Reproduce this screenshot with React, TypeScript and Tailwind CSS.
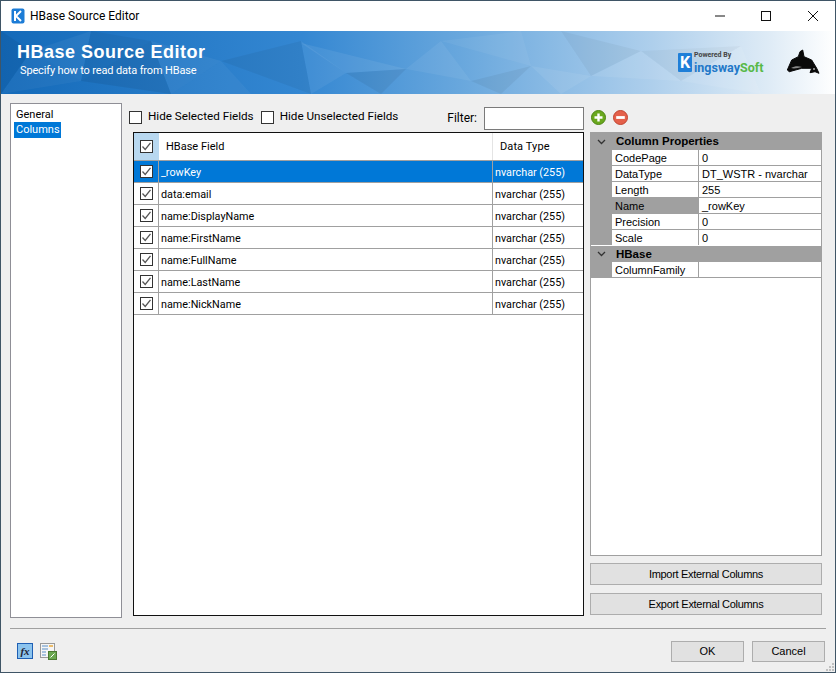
import React from "react";

const F = "[font-family:'Roboto','Liberation_Sans',sans-serif]";
const rows = ["_rowKey", "data:email", "name:DisplayName", "name:FirstName", "name:FullName", "name:LastName", "name:NickName"];

function Tick() {
  return (
    <span className="w-[13px] h-[13px] border border-[#333333] flex items-center justify-center shrink-0 bg-white">
      <svg width="11" height="11" viewBox="0 0 11 11"><path d="M1.5 5.5 L4.2 8.4 L9.5 1.8" fill="none" stroke="#555555" strokeWidth="1.3" /></svg>
    </span>
  );
}

function Banner() {
  const tris: [string, string, number][] = [
    ["0,0 30,20 0,63", "#000", 0.06], ["30,20 90,0 80,50", "#fff", 0.05], ["0,63 30,20 80,50", "#fff", 0.04],
    ["90,0 150,10 80,50", "#000", 0.05], ["150,10 220,30 170,63", "#fff", 0.05], ["80,50 150,10 170,63", "#000", 0.07],
    ["220,30 300,10 310,63", "#000", 0.05], ["220,30 250,63 170,63", "#fff", 0.04], ["300,10 345,42 310,63", "#fff", 0.06],
    ["345,42 405,38 300,12", "#fff", 0.07], ["345,42 405,38 380,63", "#000", 0.06], ["405,38 440,10 470,50", "#fff", 0.06],
    ["440,10 520,0 530,35", "#fff", 0.05], ["470,50 530,35 500,63", "#000", 0.05], ["530,35 590,45 560,63", "#fff", 0.07],
    ["590,45 640,20 680,50", "#fff", 0.08], ["560,0 590,45 640,20", "#000", 0.04], ["680,50 740,15 760,63", "#fff", 0.08],
    ["640,20 740,15 680,50", "#000", 0.03],
  ];
  return (
    <svg className="absolute inset-0" width="834" height="63" viewBox="0 0 834 63" preserveAspectRatio="none">
      <defs>
        <linearGradient id="bg" x1="0" x2="1" y1="0" y2="0">
          <stop offset="0" stopColor="#146ab9" />
          <stop offset="0.36" stopColor="#3487d2" />
          <stop offset="0.55" stopColor="#68a7dd" />
          <stop offset="0.78" stopColor="#aecfec" />
          <stop offset="0.92" stopColor="#deebf6" />
          <stop offset="1" stopColor="#ffffff" />
        </linearGradient>
      </defs>
      <rect width="834" height="63" fill="url(#bg)" />
      {tris.map((t, i) => <polygon key={i} points={t[0]} fill={t[1]} fillOpacity={t[2]} />)}
    </svg>
  );
}

function PropRow({ k, v, sel, end }: { k: string; v: string; sel?: boolean; end?: boolean }) {
  return (
    <div className={`flex h-[16px] bg-[#a0a0a0] ${end ? "border-b border-white" : ""}`}>
      <div className="w-[21px] shrink-0" />
      <div className={`w-[86px] shrink-0 pl-[3px] leading-[16px] whitespace-nowrap ${end ? "" : "border-b border-[#a0a0a0]"} ${sel ? "bg-[#a0a0a0]" : "bg-white"}`}>{k}</div>
      <div className={`ml-px flex-1 bg-white pl-[3px] leading-[16px] whitespace-nowrap ${end ? "" : "border-b border-[#a0a0a0]"}`}>{v}</div>
    </div>
  );
}

function PropHead({ t, h }: { t: string; h: string }) {
  return (
    <div className={`flex items-center bg-[#a0a0a0] font-bold ${h}`}>
      <svg className="ml-[6px] mr-[10px]" width="9" height="6" viewBox="0 0 9 6"><path d="M1 1 L4.5 4.5 L8 1" fill="none" stroke="#333" strokeWidth="1.3" /></svg>
      <span className="leading-[15px] text-[11.5px]">{t}</span>
    </div>
  );
}

export default function App() {
  return (
    <div className="w-[836px] h-[673px] border border-[#3f5566] bg-[#efefef] flex flex-col text-[11px] text-black overflow-hidden [font-family:'Liberation_Sans',sans-serif]">
      <div className="h-[30px] bg-white flex items-center shrink-0">
        <svg className="ml-[10px]" width="14" height="16" viewBox="0 0 14 16">
          <rect x="0.5" y="0.5" width="13" height="15" rx="2" fill="#1c7cd6" />
          <path d="M4 3 V13 M10 3 L5 8 L10 13" fill="none" stroke="#fff" strokeWidth="2" />
        </svg>
        <span className={`ml-[5px] text-[12px] ${F}`}>HBase Source Editor</span>
        <div className="ml-auto flex items-center">
          <svg width="12" height="12" viewBox="0 0 12 12" className="mr-[34px]"><path d="M1 6H11" stroke="#111" /></svg>
          <svg width="12" height="12" viewBox="0 0 12 12" className="mr-[35px]"><rect x="1.5" y="1.5" width="9" height="9" fill="none" stroke="#111" /></svg>
          <svg width="12" height="12" viewBox="0 0 12 12" className="mr-[16px]"><path d="M1 1L11 11M11 1L1 11" stroke="#111" /></svg>
        </div>
      </div>

      <div className="relative h-[63px] shrink-0">
        <Banner />
        <div className="relative pl-[16px] pt-[10px] text-white">
          <div className="font-bold text-[18px] leading-[22px] tracking-[0.5px]">HBase Source Editor</div>
          <div className={`pl-[3px] text-[11px] leading-[16px] tracking-[-0.15px] ${F}`}>Specify how to read data from HBase</div>
        </div>
        <div className={`absolute left-[677px] top-[20px] flex items-start ${F}`}>
          <span className="mt-[2px] w-[14px] h-[19px] bg-[#1f7fd8] rounded-[1px] text-white font-bold text-[16px] leading-[19px] text-center">K</span>
          <div className="flex flex-col ml-[2px]">
            <span className="text-[7px] leading-[9px] font-bold text-[#444]">Powered By</span>
            <span className="text-[12.5px] leading-[15px] font-bold whitespace-nowrap"><span className="text-[#2278c8]">ingsway</span><span className="text-[#57b947]">Soft</span></span>
          </div>
        </div>
        <svg className="absolute left-[786px] top-[18px]" width="34" height="26" viewBox="0 0 34 26">
          <path d="M0.3 21 L4.7 11 L11.3 7.7 L13 2.7 L15.7 1 L17 7.7 L24.7 11 L29.7 19.3 L32 24.3 L28 22.7 L23 23.7 L24.7 19.3 L14.7 19.3 L2.3 22.7Z" fill="#0a0a0a" strokeLinejoin="round" stroke="#0a0a0a" />
          <path d="M4 19 C8 16.5 12 17 15 18 C11 19 7 20 4 19Z" fill="#888" />
          <circle cx="27" cy="20" r="1" fill="#aaa" />
        </svg>
      </div>

      <div className="h-[534px] shrink-0 flex pl-[9px]">
        <div className={`mt-[9px] w-[112px] h-[515px] border border-[#8f8f96] bg-white pt-[2px] pl-[3px] ${F}`}>
          <div className="pl-[2px] h-[16px] leading-[18px]">General</div>
          <div className="pl-[2px] w-[47px] h-[16px] leading-[16px] bg-[#0078d7] text-white">Columns</div>
        </div>

        <div className="ml-[7px] w-[455px] flex flex-col">
          <div className={`flex items-center h-[38px] pt-[13px] pb-[2px] text-[11.7px] ${F}`}>
            <span className="w-[13px] h-[13px] border border-[#333] bg-white mb-[2px]" />
            <span className="ml-[6px] mb-[3px]">Hide Selected Fields</span>
            <span className="ml-[7px] w-[13px] h-[13px] border border-[#333] bg-white mb-[2px]" />
            <span className="ml-[6px] mb-[3px]">Hide Unselected Fields</span>
            <span className="ml-auto mb-[2px] text-[12px]">Filter:</span>
            <span className="ml-[7px] w-[100px] h-[23px] border border-[#7a7a7a] bg-white" />
          </div>
          <div className={`ml-[4px] w-[451px] h-[484px] border border-[#111] bg-white ${F}`}>
            <div className="flex h-[27px]">
              <div className="w-[25px] bg-[#b8d8f0] flex items-center justify-center shrink-0"><Tick /></div>
              <div className="w-[334px] pl-[7px] leading-[27px] border-r border-[#e4e4e4] shrink-0">HBase Field</div>
              <div className="pl-[7px] leading-[27px] tracking-[0.1px]">Data Type</div>
            </div>
            {rows.map((r, i) => (
              <div key={r} className={`flex h-[22px] border-t border-[#a0a0a0] text-[10.8px] ${i === 0 ? "bg-[#0078d7] text-white" : ""}`}>
                <div className="w-[25px] border-r border-[#a0a0a0] flex items-center justify-center shrink-0"><Tick /></div>
                <div className="w-[334px] pl-[2px] pt-px leading-[22px] border-r border-[#a0a0a0] shrink-0">{r}</div>
                <div className="pl-[2px] pt-px leading-[22px]">nvarchar (255)</div>
              </div>
            ))}
            <div className="border-t border-[#a0a0a0]" />
          </div>
        </div>

        <div className="ml-[6px] w-[232px] flex flex-col">
          <div className="flex h-[38px] items-start pt-[16px] pl-px gap-[7px]">
            <svg width="15" height="15" viewBox="0 0 15 15">
              <circle cx="7.5" cy="7.5" r="7" fill="#6aa81e" stroke="#4d8413" />
              <path d="M7.5 3.5V11.5M3.5 7.5H11.5" stroke="#fff" strokeWidth="2.4" />
            </svg>
            <svg width="15" height="15" viewBox="0 0 15 15">
              <circle cx="7.5" cy="7.5" r="7" fill="#e4604a" stroke="#c0432f" />
              <path d="M3.2 7.5H11.8" stroke="#fff" strokeWidth="2.8" />
            </svg>
          </div>
          <div className="h-[424px] border border-[#a0a0a0] bg-white leading-[15px]">
            <PropHead t="Column Properties" h="h-[17px]" />
            <PropRow k="CodePage" v="0" />
            <PropRow k="DataType" v="DT_WSTR - nvarchar" />
            <PropRow k="Length" v="255" />
            <PropRow k="Name" v="_rowKey" sel />
            <PropRow k="Precision" v="0" />
            <PropRow k="Scale" v="0" end />
            <PropHead t="HBase" h="h-[16px]" />
            <PropRow k="ColumnFamily" v="" />
          </div>
          <div className="mt-[7px] h-[22px] border border-[#adadad] bg-[#e1e1e1] flex items-center justify-center tracking-[-0.3px]">Import External Columns</div>
          <div className="mt-[8px] h-[22px] border border-[#adadad] bg-[#e1e1e1] flex items-center justify-center tracking-[-0.3px]">Export External Columns</div>
        </div>
      </div>

      <div className="relative h-[44px] shrink-0">
        <div className="ml-[9px] mr-[9px] h-px bg-[#a0a0a0]" />
        <div className="flex items-start pt-[12px] pl-[16px] h-[43px]">
          <span className="w-[16px] h-[16px] mt-[2px] border border-[#1f5fb4] bg-[#8cc4ee] flex items-center justify-center italic font-bold text-[11px] leading-none [font-family:'Liberation_Serif',serif] text-[#223]">fx</span>
          <svg className="ml-[7px] mt-[2px]" width="17" height="17" viewBox="0 0 17 17">
            <rect x="0.5" y="0.5" width="14" height="14" fill="#f5f5f5" stroke="#999" />
            <path d="M2 3H8M2 6H8M2 9H6M2 12H6" stroke="#5a8fc8" strokeWidth="1.2" />
            <path d="M9 3H13" stroke="#e8a93c" strokeWidth="1.5" />
            <rect x="8.5" y="8.5" width="8" height="8" fill="#6aa84f" stroke="#4a7a30" />
            <path d="M10.5 14.5L14.5 10.5" stroke="#fff" />
          </svg>
          <div className="ml-auto mr-[10px] flex gap-[8px]">
            <div className="w-[73px] h-[21px] border border-[#adadad] bg-[#e1e1e1] flex items-center justify-center">OK</div>
            <div className="w-[73px] h-[21px] border border-[#adadad] bg-[#e1e1e1] flex items-center justify-center">Cancel</div>
          </div>
        </div>
        <svg className="absolute right-[1px] bottom-[1px]" width="8" height="8" viewBox="0 0 8 8">
          <path d="M6 0h2v2H6zM3 3h2v2H3zM6 3h2v2H6zM0 6h2v2H0zM3 6h2v2H3zM6 6h2v2H6z" fill="#c0c0c0" />
        </svg>
      </div>
    </div>
  );
}
